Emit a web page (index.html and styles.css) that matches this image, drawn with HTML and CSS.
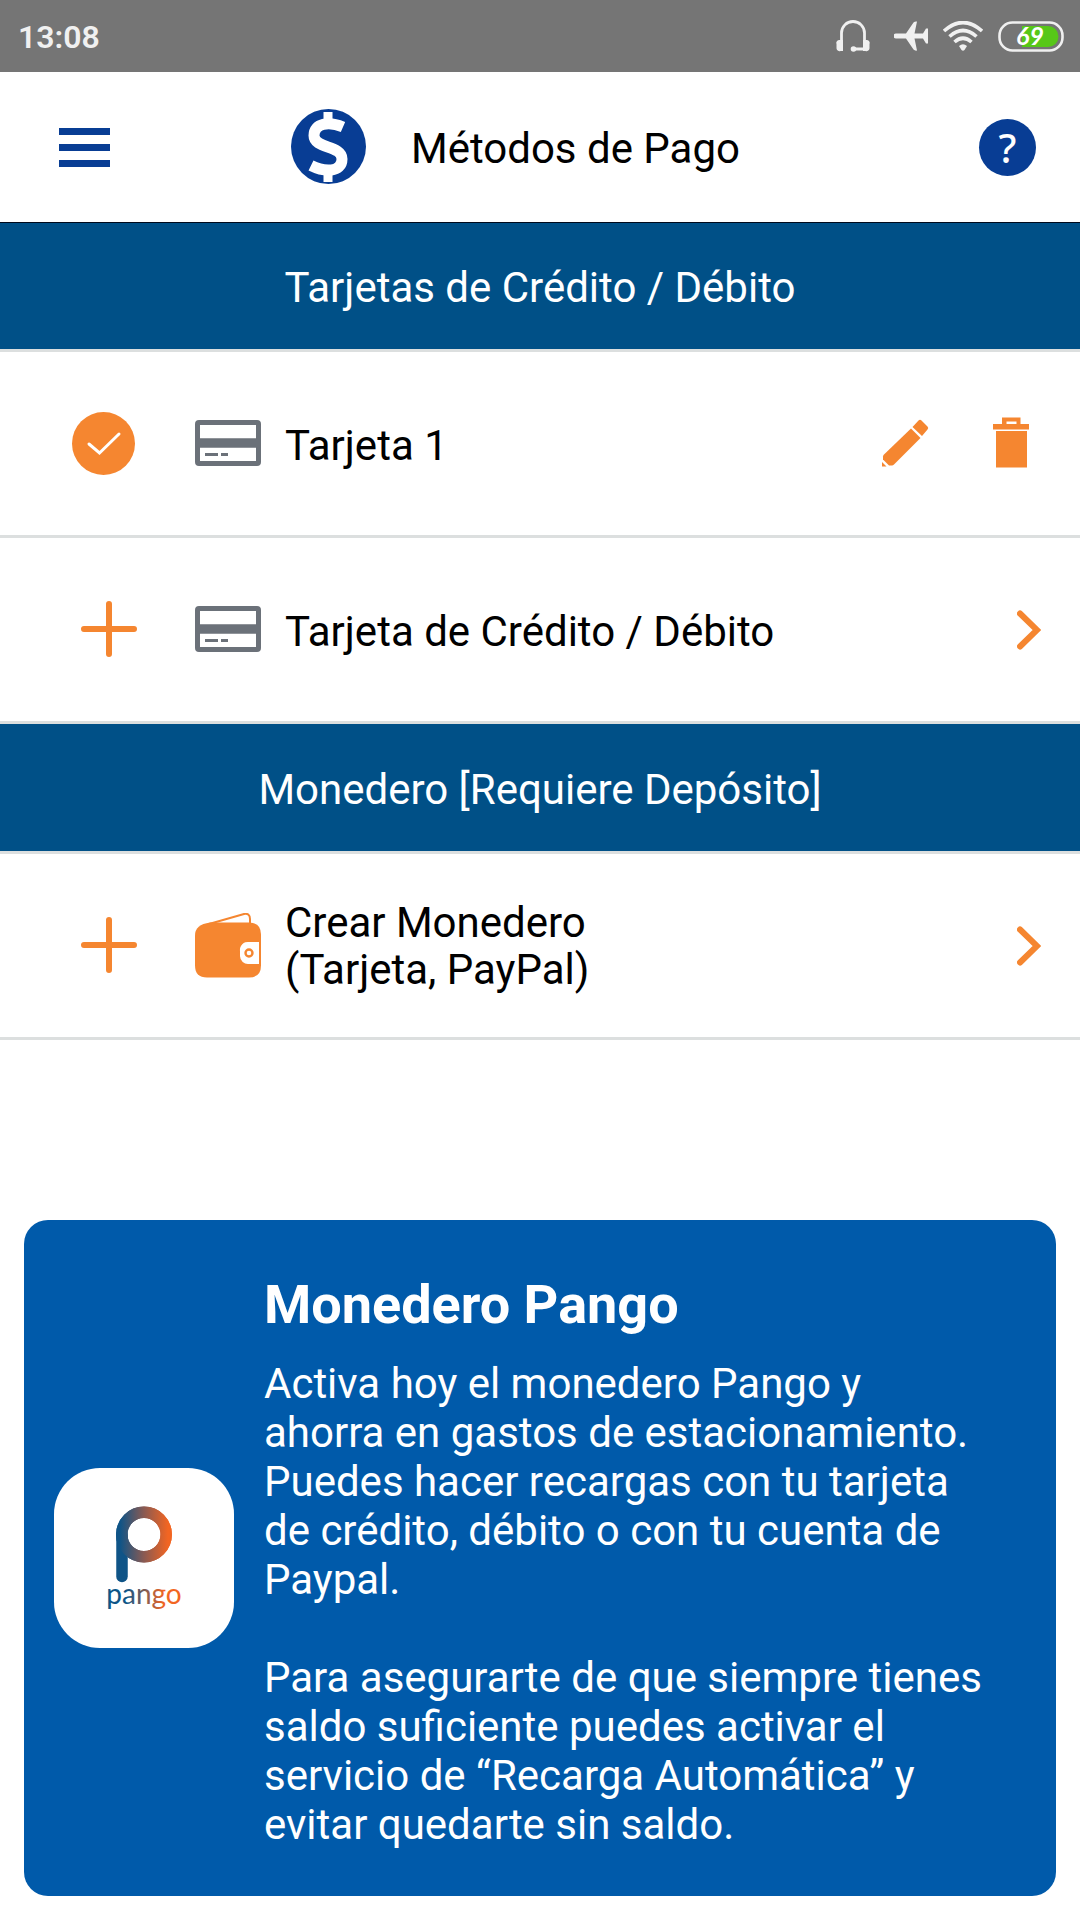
FILE: index.html
```html
<!DOCTYPE html>
<html lang="es">
<head>
    <meta charset="UTF-8">
    <meta name="viewport" content="width=device-width, initial-scale=1.0">
    <title>Métodos de Pago</title>
    <link rel="stylesheet" href="styles.css">
</head>
<body>
    <div class="status-bar">
        <span class="clock">13:08</span>
        <div class="status-icons">
            <svg class="icon-headset" width="34" height="32" viewBox="0 0 34 32" aria-hidden="true">
                <path d="M5.500 22V13a11.500 11.500 0 0 1 23 0v9M28 29H18" fill="none" stroke="#f0f0f0" stroke-width="2.800"/>
                <path d="M4 20h3v11H4.500a3 3 0 0 1-4-3v-4a3 3 0 0 1 3.500-4zM30 20h-3v11h2.500a3 3 0 0 0 4-3v-4a3 3 0 0 0-3.500-4z" fill="#f0f0f0"/>
                <circle cx="17.500" cy="29" r="2.800" fill="#f0f0f0"/>
            </svg>
            <svg class="icon-plane" width="34" height="30" viewBox="0 0 34 30" aria-hidden="true">
                <path d="M2 12.500h10L19.500 1.500Q21 0 23 .5L20.500 12.500H29l3-5h2v15h-2L29 17.500h-8.500l2.500 12q-2 .5-3.500-1L12 17.500H2a2.500 2.500 0 0 1 0-5z" fill="#f0f0f0"/>
            </svg>
            <svg class="icon-wifi" width="40" height="30" viewBox="0 0 40 30" aria-hidden="true">
                <path d="M1 10Q20-7 39 10M6.500 15.500q13.500-12 27 0M11.500 21q8.500-7.500 17 0" fill="none" stroke="#f0f0f0" stroke-width="3.600"/>
                <path d="M16 25q4-3.500 8 0l-2.500 4q-1.500 1.500-3 0z" fill="#f0f0f0"/>
            </svg>
            <svg class="icon-battery" width="66" height="31" viewBox="0 0 66 31" role="img" aria-label="Batería 69%">
                <rect x="1.500" y="1.500" width="63" height="28" rx="13" fill="none" stroke="#f0f0f0" stroke-width="2.600"/>
                <path d="M24 5h26a10.500 10.500 0 0 1 0 21H24z" fill="#57c718"/>
                <text class="battery-level" x="32" y="24" text-anchor="middle">69</text>
            </svg>
        </div>
    </div>

    <header class="app-header">
        <button class="icon-btn" type="button" aria-label="Menú">
            <svg width="51" height="39" viewBox="0 0 51 39">
                <path d="M0 3.500h51M0 19.500h51M0 35.500h51" stroke="#083d94" stroke-width="7"/>
            </svg>
        </button>
        <div class="header-title">
            <svg width="75" height="77" viewBox="0 0 75 77" aria-hidden="true">
                <circle cx="37.500" cy="37.500" r="37.500" fill="#083d94"/>
                <path d="M52 18C38 12 23 14 23 26.500C23 40 51 36 51 50C51 64 33 63 20 56.500" fill="none" stroke="#fff" stroke-width="11"/>
                <path d="M37 3v12M37 60v13" stroke="#fff" stroke-width="9"/>
            </svg>
            <h1>Métodos de Pago</h1>
        </div>
        <button class="help-btn" type="button" aria-label="Ayuda">?</button>
    </header>

    <main>
        <section>
            <h2 class="section-title">Tarjetas de Crédito / Débito</h2>
            <div class="row">
                <div class="row-lead">
                    <input class="card-radio" type="radio" name="card" id="card-1" checked>
                </div>
                <svg class="row-icon" width="66" height="66" viewBox="0 0 66 66" aria-hidden="true">
                    <rect x="2.500" y="11.500" width="61" height="41" rx="1.500" fill="#fff" stroke="#6b7179" stroke-width="5"/>
                    <path d="M3 32h60" stroke="#6b7179" stroke-width="9.500"/>
                    <path d="M10 43.500h13M26 43.500h7" stroke="#6b7179" stroke-width="3"/>
                </svg>
                <label class="row-label single" for="card-1">Tarjeta 1</label>
                <div class="row-actions">
                    <button class="action-btn" type="button" aria-label="Editar">
                        <svg width="60" height="60" viewBox="1 1 60 60">
                            <g fill="#f58630">
                                <path d="M43.500 7.500Q45 6 46.500 7.500l6 6q1.500 1.500 0 3L47 23 37.500 14z"/>
                                <path d="M36 15.500L45.500 25 19 51.500q-1 1-2 1h-3L8 46.500v-3q0-1 1-2z"/>
                                <path d="M7 49l4.500 4.500H7z"/>
                            </g>
                        </svg>
                    </button>
                    <button class="action-btn" type="button" aria-label="Eliminar">
                        <svg width="60" height="60" viewBox="0 1 60 60">
                            <g fill="#f58630">
                                <path fill-rule="evenodd" d="M21 4.500h18.500V11H48v5.500H12V11h9zM25.500 8.500V11h10V8.500z"/>
                                <path d="M15 18h31v36.500H15z"/>
                            </g>
                        </svg>
                    </button>
                </div>
            </div>
            <a class="row" href="#agregar-tarjeta">
                <span class="row-lead">
                    <svg width="74" height="60" viewBox="0 0 74 60" aria-hidden="true">
                        <path d="M37 4v50M12 29h50" fill="none" stroke="#f58630" stroke-width="6" stroke-linecap="round"/>
                    </svg>
                </span>
                <svg class="row-icon" width="66" height="66" viewBox="0 0 66 66" aria-hidden="true">
                    <rect x="2.500" y="11.500" width="61" height="41" rx="1.500" fill="#fff" stroke="#6b7179" stroke-width="5"/>
                    <path d="M3 32h60" stroke="#6b7179" stroke-width="9.500"/>
                    <path d="M10 43.500h13M26 43.500h7" stroke="#6b7179" stroke-width="3"/>
                </svg>
                <span class="row-label single">Tarjeta de Crédito / Débito</span>
                <svg class="chevron" width="24" height="40" viewBox="0 0 24 40" aria-hidden="true">
                    <path d="M3 3.500L20 20 3 36.500" fill="none" stroke="#f58630" stroke-width="6" stroke-linecap="round"/>
                </svg>
            </a>
        </section>

        <section>
            <h2 class="section-title">Monedero [Requiere Depósito]</h2>
            <a class="row" href="#crear-monedero">
                <span class="row-lead">
                    <svg width="74" height="60" viewBox="0 0 74 60" aria-hidden="true">
                        <path d="M37 4v50M12 29h50" fill="none" stroke="#f58630" stroke-width="6" stroke-linecap="round"/>
                    </svg>
                </span>
                <svg class="row-icon" width="66" height="66" viewBox="0 1 66 66" aria-hidden="true">
                    <path d="M14 12L49 2q6-1 6 5v6" fill="none" stroke="#f58630" stroke-width="2"/>
                    <path d="M15 10.500h39q12 0 12 12v31q0 12-12 12H12q-12 0-12-12v-30q0-11 15-13z" fill="#f58630"/>
                    <path d="M64 30v22H54a8 8 0 0 1-9-8v-5a8 8 0 0 1 9-9z" fill="#fff"/>
                    <circle cx="54" cy="41" r="3.500" fill="none" stroke="#f58630" stroke-width="2.400"/>
                </svg>
                <span class="row-label">Crear Monedero<br>(Tarjeta, PayPal)</span>
                <svg class="chevron" width="24" height="40" viewBox="0 0 24 40" aria-hidden="true">
                    <path d="M3 3.500L20 20 3 36.500" fill="none" stroke="#f58630" stroke-width="6" stroke-linecap="round"/>
                </svg>
            </a>
        </section>

        <section class="promo">
            <svg class="promo-logo" width="180" height="180" viewBox="0 0 180 180" role="img" aria-label="pango">
                <defs>
                    <linearGradient id="mark" gradientUnits="userSpaceOnUse" x1="66" y1="0" x2="114" y2="0">
                        <stop offset="0" stop-color="#0f5487"/>
                        <stop offset=".5" stop-color="#8a5a52"/>
                        <stop offset="1" stop-color="#f26522"/>
                    </linearGradient>
                    <linearGradient id="word" gradientUnits="userSpaceOnUse" x1="72" y1="0" x2="110" y2="0">
                        <stop offset="0" stop-color="#0f5487"/>
                        <stop offset="1" stop-color="#f26522"/>
                    </linearGradient>
                </defs>
                <circle cx="90" cy="66.500" r="22.200" fill="none" stroke="url(#mark)" stroke-width="11.500"/>
                <path d="M68 66.500v42" fill="none" stroke="#0f5487" stroke-width="11.500" stroke-linecap="round"/>
                <circle cx="90" cy="66.500" r="22.200" fill="none" stroke="url(#mark)" stroke-width="11.500"/>
                <text class="wordmark" x="90" y="136" text-anchor="middle" fill="url(#word)">pango</text>
            </svg>
            <div class="promo-text">
                <h2>Monedero Pango</h2>
                <p>Activa hoy el monedero Pango y ahorra en gastos de estacionamiento. Puedes hacer recargas con tu tarjeta de crédito, débito o con tu cuenta de Paypal.</p>
                <p>Para asegurarte de que siempre tienes saldo suficiente puedes activar el servicio de “Recarga Automática” y evitar quedarte sin saldo.</p>
            </div>
        </section>
    </main>
</body>
</html>
```
FILE: styles.css
```css
* {
    box-sizing: border-box;
}

body {
    margin: 0;
    font-family: Roboto, "Liberation Sans", sans-serif;
    font-size: 42px;
    line-height: 47px;
    color: #000;
    background-color: #fff;
}

h1,
h2,
p {
    margin: 0;
    font-size: inherit;
    font-weight: 400;
}

svg {
    display: block;
    flex: none;
}

button {
    padding: 0;
    border: none;
    background: none;
    font-family: inherit;
    cursor: pointer;
}

/* Status bar */
.status-bar {
    display: flex;
    align-items: center;
    justify-content: space-between;
    height: 72px;
    padding: 0 16px 0 18px;
    background-color: #757575;
}

.clock {
    padding-top: 2px;
    color: #f0f0f0;
    font-size: 32px;
    font-weight: 600;
}

.status-icons {
    display: flex;
    align-items: center;
    gap: 15px;
}

.icon-headset {
    margin-right: 9px;
}

.battery-level {
    fill: #fff;
    font-family: Lato, sans-serif;
    font-size: 25px;
    font-weight: 700;
    font-style: italic;
}

/* Header */
.app-header {
    display: flex;
    align-items: center;
    height: 150px;
    padding: 0 44px 0 59px;
}

.header-title {
    display: flex;
    flex: 1;
    align-items: center;
    justify-content: center;
    gap: 45px;
    padding-right: 58px;
}

.header-title h1 {
    padding-top: 2px;
}

.help-btn {
    width: 57px;
    height: 57px;
    border-radius: 50%;
    background-color: #083d94;
    color: #fff;
    font-family: "Noto Sans", sans-serif;
    font-size: 40px;
    font-weight: 500;
    line-height: 57px;
}

/* Lists */
.section-title {
    padding: 42px 24px 38px;
    background-color: #005087;
    color: #fff;
    text-align: center;
    border-bottom: 3px solid #dcdfdf;
}

section:first-child .section-title {
    padding-top: 41px;
    border-top: 1px solid #000a1c;
}

.row {
    display: flex;
    align-items: center;
    min-height: 186px;
    padding: 0 39px 0 72px;
    border-bottom: 3px solid #dcdfdf;
    color: inherit;
    text-decoration: none;
}

.row-lead {
    width: 123px;
}

.row-label {
    flex: 1;
    margin-left: 24px;
}

.row-label.single {
    padding-top: 4px;
}

.card-radio {
    display: block;
    width: 63px;
    height: 63px;
    margin: 0;
    border: 3px solid #f58630;
    border-radius: 50%;
    appearance: none;
}

.card-radio:checked {
    border: none;
    background: #f58630 url("data:image/svg+xml,%3Csvg xmlns='http://www.w3.org/2000/svg' viewBox='0 0 63 63'%3E%3Cpath d='M17 32l10.500 9L47 22' fill='none' stroke='%23fff' stroke-width='3' stroke-linecap='round'/%3E%3C/svg%3E") center / contain;
}

.row-actions {
    display: flex;
    gap: 45px;
}

/* Promo card */
.promo {
    display: flex;
    align-items: center;
    gap: 30px;
    margin: 180px 24px 24px;
    padding: 46px 72px 46px 30px;
    border-radius: 24px;
    background-color: #005aaa;
    color: #fff;
}

.promo-logo {
    border-radius: 46px;
    background-color: #fff;
}

.wordmark {
    font-family: Lato, sans-serif;
    font-size: 28px;
}

.promo-text {
    flex: 1;
    padding: 9px 0 1px;
    line-height: 49px;
}

.promo-text h2 {
    margin-bottom: 24px;
    font-size: 54px;
    font-weight: 700;
    line-height: 60px;
}

.promo-text p + p {
    margin-top: 49px;
}
```
